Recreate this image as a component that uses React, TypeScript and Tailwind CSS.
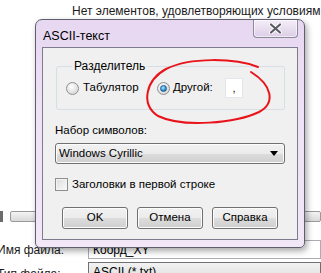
import React from "react";

const font = { fontFamily: '"Liberation Sans", Arial, sans-serif' };

function Radio({ checked }: { checked?: boolean }) {
  return (
    <span className="flex h-[13px] w-[13px] shrink-0 items-center justify-center rounded-full border border-[#8e8f8f] bg-[radial-gradient(circle_at_40%_35%,#ffffff,#dcdcdc_70%,#c8c8c8)]">
      {checked && (
        <span className="h-[7px] w-[7px] rounded-full border border-[#1c5a8a] bg-[radial-gradient(circle_at_40%_35%,#b7e6ff,#2f8fd6_60%,#0b4f8a)]" />
      )}
    </span>
  );
}

function Btn({ children }: { children: React.ReactNode }) {
  return (
    <button className="flex h-[22px] w-[66px] items-center justify-center rounded-[3px] border border-[#707070] bg-[linear-gradient(#f2f2f2,#ebebeb_50%,#dddddd_50%,#cfcfcf)] text-[11.5px] text-black shadow-[inset_0_0_0_1px_#fcfcfc]">
      {children}
    </button>
  );
}

function Dialog() {
  return (
    <div className="absolute left-[35px] top-[19px] flex w-[270px] flex-col rounded-t-[7px] rounded-b-[5px] border border-[#5e5e6e] bg-[linear-gradient(#e7d7f1,#eee2f6_40%,#f1e7f7)] px-[6px] pb-[7px] shadow-[2px_3px_6px_rgba(0,0,0,0.35)]">
      <div className="flex h-[27px] items-start justify-between">
        <span className="mt-[7px] pl-[1px] text-[12.5px] text-black">ASCII-текст</span>
        <div className="flex h-[18px] w-[45px] items-center justify-center rounded-b-[4px] border border-t-0 border-[#8c8a98] bg-[linear-gradient(#f4eef8,#e9def0_50%,#dccde6)] shadow-[inset_0_0_0_1px_rgba(255,255,255,0.6)]">
          <svg width="13" height="11" viewBox="0 0 13 11">
            <path d="M2 1.5 L11 9.5 M11 1.5 L2 9.5" stroke="#ffffff" strokeWidth="4" strokeLinecap="round" />
            <path d="M2 1.5 L11 9.5 M11 1.5 L2 9.5" stroke="#5b5b63" strokeWidth="2.2" strokeLinecap="round" />
          </svg>
        </div>
      </div>
      <div className="flex flex-col border border-[#7c7c8c] bg-[#f0f0f0] px-[12px] pt-[11px] pb-[10px] text-[11.5px] text-black">
        <fieldset className="ml-[1px] w-[229px] rounded-[3px] border border-[#d5dfe5] pt-[5px] pb-[11px] pl-[9px]">
          <legend className="ml-[6px] px-[2px] text-[12px] leading-[14px]">Разделитель</legend>
          <div className="flex h-[20px] items-center">
            <div className="flex w-[91px] items-center gap-[4px]">
              <Radio />
              <span>Табулятор</span>
            </div>
            <div className="flex w-[68px] items-center gap-[3px]">
              <Radio checked />
              <span>Другой:</span>
            </div>
            <div className="flex h-[20px] w-[18px] items-center justify-center border border-[#e2e6ea] bg-white text-[11px] leading-none">
              <span className="mt-[1px]">,</span>
            </div>
          </div>
        </fieldset>
        <div className="mt-[13px] leading-[14px]">Набор символов:</div>
        <div className="mt-[6px] flex h-[21px] w-[230px] items-center justify-between rounded-[3px] border border-[#707070] bg-[linear-gradient(#f2f2f2,#ebebeb_50%,#dddddd_50%,#cfcfcf)] pl-[3px] pr-[6px] shadow-[inset_0_0_0_1px_#fcfcfc]">
          <span>Windows Cyrillic</span>
          <svg width="8" height="5" viewBox="0 0 8 5">
            <path d="M0 0 H8 L4 5 Z" fill="#000" />
          </svg>
        </div>
        <div className="mt-[14px] flex h-[13px] items-center gap-[4px]">
          <span className="h-[13px] w-[13px] shrink-0 border border-[#8e8f8f] bg-[linear-gradient(135deg,#dcdcdc,#fbfbfb)] shadow-[inset_0_0_0_1px_#f4f4f4]" />
          <span>Заголовки в первой строке</span>
        </div>
        <div className="mt-[16px] flex gap-[9px] pl-[7px]">
          <Btn>OK</Btn>
          <Btn>Отмена</Btn>
          <Btn>Справка</Btn>
        </div>
      </div>
    </div>
  );
}

export default function App() {
  return (
    <div style={font} className="relative h-[273px] w-[321px] overflow-hidden bg-white">
      <div className="flex h-[20px] items-start pl-[72px] pt-[2px] text-[12px] whitespace-nowrap text-[#1a1a1a]">
        Нет элементов, удовлетворяющих условиям
      </div>
      <div className="mt-[191px] flex h-[11px] items-center">
        <div className="h-[11px] w-[3px] bg-[#6b6b6b]" />
        <div className="ml-[7px] h-[11px] flex-1 rounded-[2px] border border-[#9a9a9a] bg-[linear-gradient(#f4f4f4,#d9d9d9)]" />
      </div>
      <div className="mt-[18px] flex h-[19px] items-center">
        <span className="-ml-[3px] w-[91px] text-[12px] text-[#1a1a1a]">Имя файла:</span>
        <div className="flex h-[19px] flex-1 items-center border border-[#abadb3] bg-white pl-[4px] text-[12px]">Коорд_XY</div>
      </div>
      <div className="mt-[3px] flex h-[20px] items-start">
        <span className="-ml-[3px] mt-[3px] w-[91px] text-[12px] text-[#1a1a1a]">Тип файла:</span>
        <div className="flex h-[20px] flex-1 items-center border border-[#707070] bg-[linear-gradient(#f2f2f2,#dddddd)] pl-[4px] text-[12px]">ASCII (*.txt)</div>
      </div>
      <Dialog />
      <svg className="pointer-events-none absolute left-0 top-0" width="321" height="273" viewBox="0 0 321 273">
        <path
          d="M258 67 C235 58, 190 57, 166 69 C146 80, 140 104, 158 116 C183 128, 236 123, 259 112 C276 103, 272 85, 251 72"
          fill="none"
          stroke="#e8141a"
          strokeWidth="2"
          strokeLinecap="round"
        />
      </svg>
    </div>
  );
}
